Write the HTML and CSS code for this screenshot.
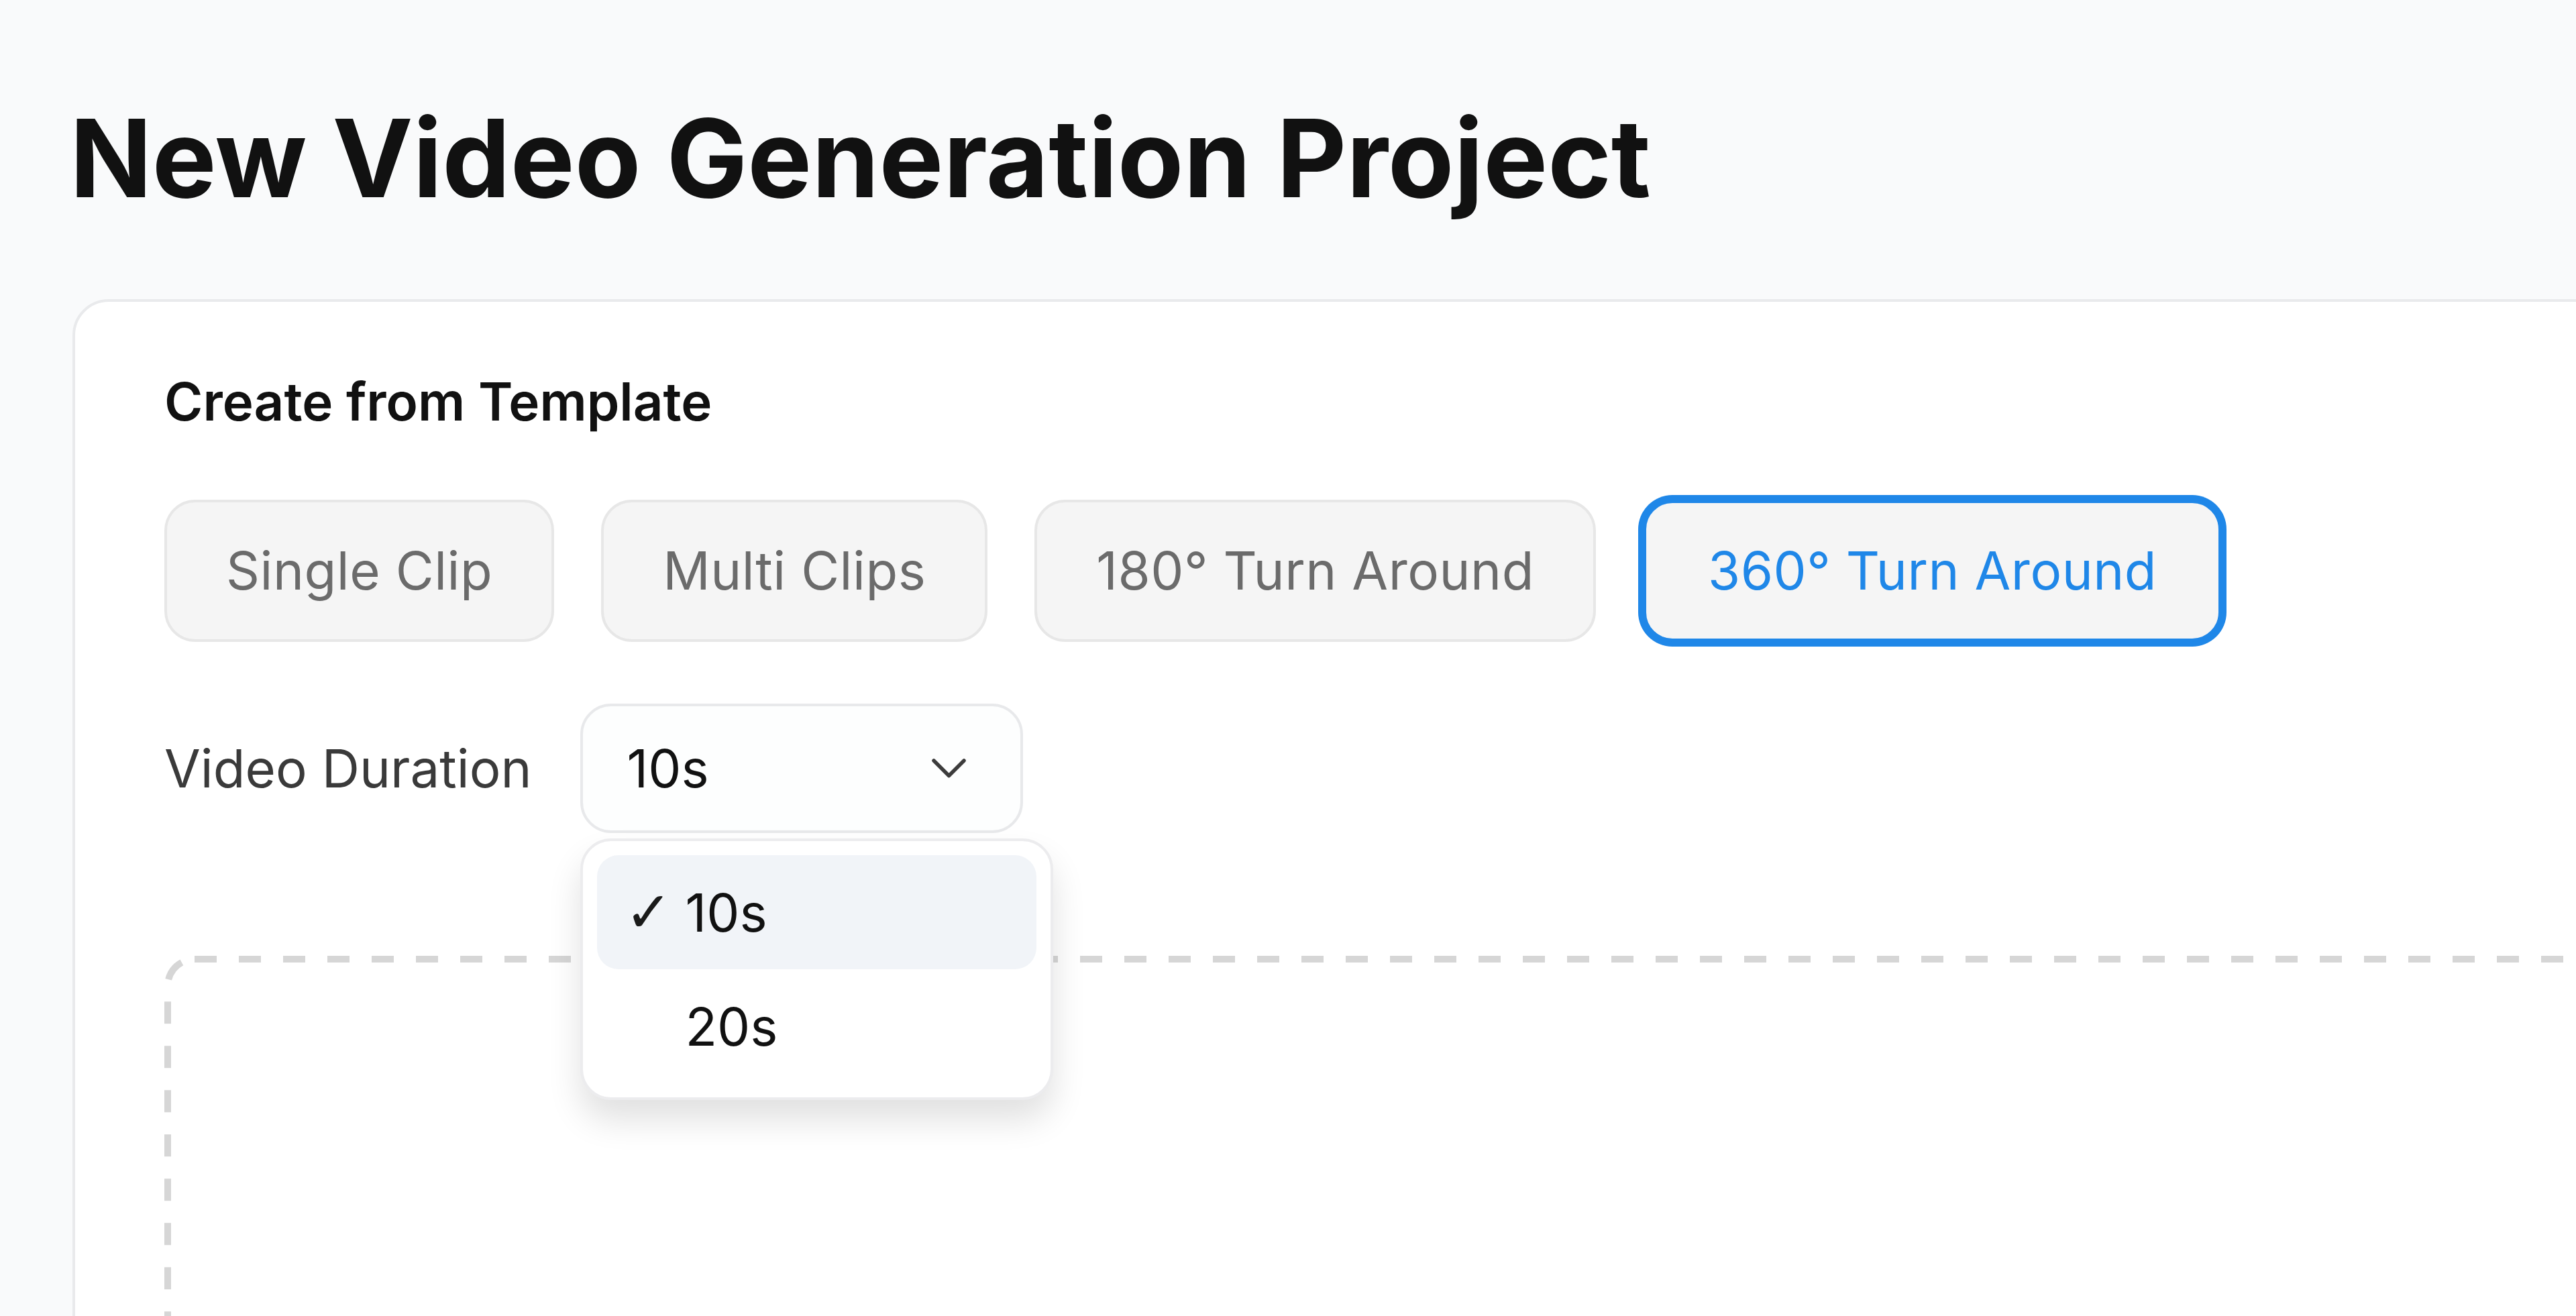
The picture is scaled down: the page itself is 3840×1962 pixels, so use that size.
FILE: index.html
```html
<!DOCTYPE html>
<html lang="en">
<head>
<meta charset="utf-8">
<title>New Video Generation Project</title>
<link rel="stylesheet" href="styles.css">
</head>
<body>
<main class="page">
  <h1 class="title">New Video Generation Project</h1>
  <section class="card">
    <h2 class="section-title">Create from Template</h2>
    <div class="templates">
      <button class="tpl">Single Clip</button>
      <button class="tpl">Multi Clips</button>
      <button class="tpl">180° Turn Around</button>
      <button class="tpl tpl-active">360° Turn Around</button>
    </div>
    <div class="duration-row">
      <span class="field-label">Video Duration</span>
      <div class="select-wrap">
        <div class="select">
          <span class="select-value">10s</span>
          <svg class="chevron" viewBox="0 0 51 29" width="51" height="29"><path d="M3 3 L25.5 25.5 L48 3" fill="none" stroke="#3c3c3c" stroke-width="5.5" stroke-linecap="round" stroke-linejoin="round"/></svg>
        </div>
        <div class="menu">
          <div class="menu-item menu-item-selected"><span class="check">✓</span><span>10s</span></div>
          <div class="menu-item"><span class="check"></span><span>20s</span></div>
        </div>
      </div>
    </div>
    <div class="dropzone">
      <svg class="dropzone-border" width="4000" height="800" viewBox="0 0 4000 800"><rect x="5" y="5" width="3990" height="790" rx="40" ry="40" fill="none" stroke="#d6d6d6" stroke-width="10" stroke-dasharray="33 33"/></svg>
    </div>
  </section>
</main>
</body>
</html>
```

FILE: styles.css
```css
html, body {
  margin: 0;
  padding: 0;
  height: 1962px;
  overflow: hidden;
  background: #f9fafb;
}

body {
  font-family: Inter, "Noto Sans", "DejaVu Sans", sans-serif;
  color: #111111;
}

.page {
  padding: 140px 0 0 108px;
}

.title {
  margin: 0 0 0 -4px;
  font-size: 161px;
  line-height: 192px;
  font-weight: 700;
  color: #111111;
}

.card {
  margin-top: 114px;
  width: 4200px;
  height: 2000px;
  box-sizing: border-box;
  background: #ffffff;
  border: 4px solid #e9eaec;
  border-radius: 54px;
  padding: 100px 0 0 133px;
}

.section-title {
  margin: 0;
  font-size: 78px;
  line-height: 97px;
  font-weight: 600;
  color: #111111;
}

.templates {
  display: flex;
  gap: 70px;
  margin-top: 98px;
}

.tpl {
  height: 212px;
  box-sizing: border-box;
  padding: 0 88px;
  border: 4px solid #e7e7e7;
  border-radius: 46px;
  background: #f5f5f5;
  color: #6b6b6b;
  font-family: Inter, "Noto Sans", sans-serif;
  font-size: 78px;
  font-weight: 400;
  letter-spacing: 0.5px;
  line-height: 1;
  display: flex;
  align-items: center;
}

.tpl-active {
  border: 5px solid #1f87e8;
  box-shadow: 0 0 0 7px #1f87e8;
  color: #1f87e8;
  border-radius: 44px;
  padding: 0 92px;
}

.duration-row {
  display: flex;
  align-items: center;
  gap: 72px;
  margin-top: 92px;
}

.field-label {
  font-size: 78px;
  color: #3a3a3a;
}

.select-wrap {
  position: relative;
}

.select {
  width: 660px;
  height: 193px;
  box-sizing: border-box;
  border: 4px solid #e8e9eb;
  border-radius: 46px;
  background: #fdfefe;
  display: flex;
  align-items: center;
  justify-content: space-between;
  padding: 0 81px 0 66px;
}

.select-value {
  font-size: 78px;
  color: #111111;
}

.chevron {
  display: block;
}

.menu {
  position: absolute;
  left: 0;
  top: 201px;
  width: 705px;
  box-sizing: border-box;
  background: #ffffff;
  border: 4px solid #ececee;
  border-radius: 46px;
  padding: 21px;
  box-shadow: 0 30px 50px rgba(0, 0, 0, 0.12);
  z-index: 2;
}

.menu-item {
  height: 170px;
  border-radius: 32px;
  display: flex;
  align-items: center;
  padding-left: 42px;
  font-size: 78px;
  color: #111111;
}

.menu-item-selected {
  background: #f1f4f8;
}

.check {
  width: 90px;
  font-family: "DejaVu Sans", sans-serif;
  font-size: 84px;
  font-weight: 700;
  line-height: 1;
  color: #1a1a1a;
}

.dropzone {
  margin-top: 183px;
  height: 800px;
  width: 4000px;
}

.dropzone-border {
  display: block;
}
```
